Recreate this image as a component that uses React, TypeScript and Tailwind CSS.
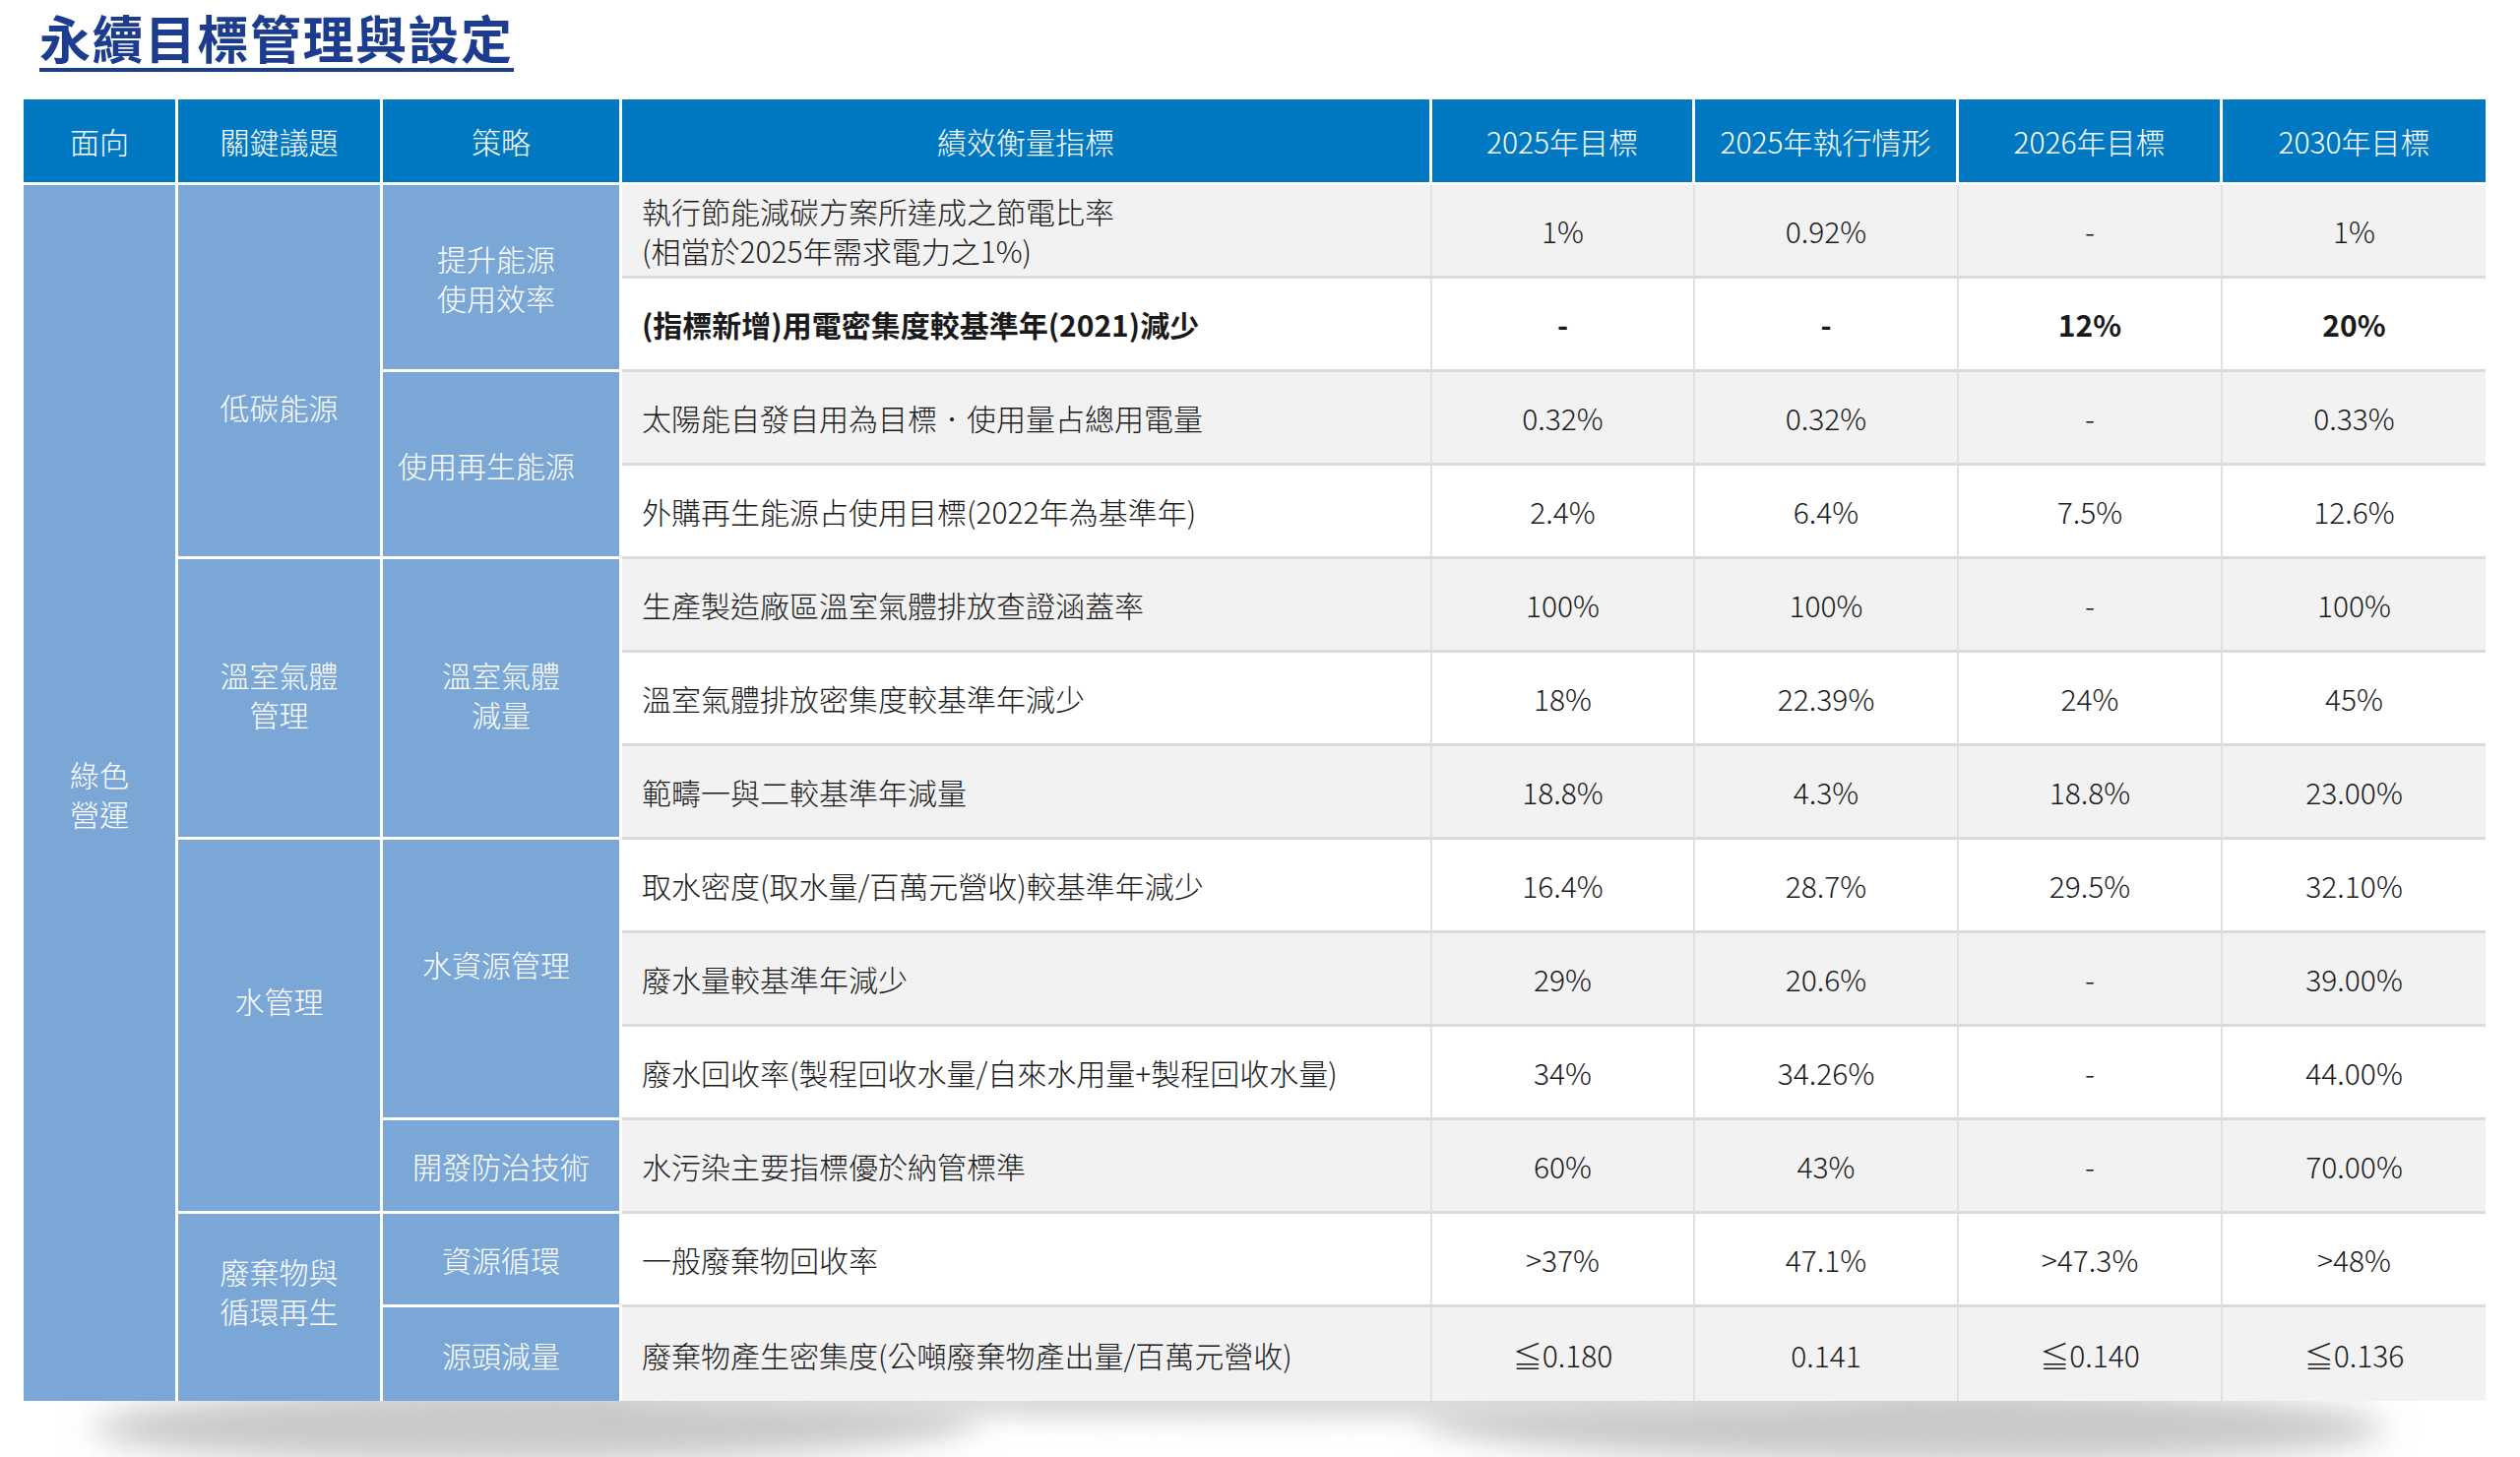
const font = { fontFamily: '"Noto Sans CJK TC", "Noto Sans", sans-serif' };

const colStart = [
  "col-start-1",
  "col-start-2",
  "col-start-3",
  "col-start-4",
  "col-start-5",
  "col-start-6",
  "col-start-7",
  "col-start-8",
];

const rowStart = [
  "row-start-1",
  "row-start-2",
  "row-start-3",
  "row-start-4",
  "row-start-5",
  "row-start-6",
  "row-start-7",
  "row-start-8",
  "row-start-9",
  "row-start-10",
  "row-start-11",
  "row-start-12",
  "row-start-13",
  "row-start-14",
];

const rowSpan: Record<number, string> = {
  1: "row-span-1",
  2: "row-span-2",
  3: "row-span-3",
  4: "row-span-4",
  13: "row-span-13",
};

const headers = ["面向", "關鍵議題", "策略", "績效衡量指標", "2025年目標", "2025年執行情形", "2026年目標", "2030年目標"];

// blue label cells: column, first body row, span, lines, padding to nudge the text
const labels = [
  { col: 0, row: 1, span: 13, lines: ["綠色", "營運"], pad: "" },
  { col: 1, row: 1, span: 4, lines: ["低碳能源"], pad: "pt-[72px]" },
  { col: 1, row: 5, span: 3, lines: ["溫室氣體", "管理"], pad: "pb-[8px]" },
  { col: 1, row: 8, span: 4, lines: ["水管理"], pad: "pb-[52px]" },
  { col: 1, row: 12, span: 2, lines: ["廢棄物與", "循環再生"], pad: "pb-[34px]" },
  { col: 2, row: 1, span: 2, lines: ["提升能源", "使用效率"], pad: "pr-[10px]" },
  { col: 2, row: 3, span: 2, lines: ["使用再生能源"], pad: "pr-[30px]" },
  { col: 2, row: 5, span: 3, lines: ["溫室氣體", "減量"], pad: "pb-[8px]" },
  { col: 2, row: 8, span: 3, lines: ["水資源管理"], pad: "pb-[30px] pr-[10px]" },
  { col: 2, row: 11, span: 1, lines: ["開發防治技術"], pad: "" },
  { col: 2, row: 12, span: 1, lines: ["資源循環"], pad: "" },
  { col: 2, row: 13, span: 1, lines: ["源頭減量"], pad: "" },
];

const rows: { kpi: string[]; vals: string[]; bold?: boolean }[] = [
  { kpi: ["執行節能減碳方案所達成之節電比率", "(相當於2025年需求電力之1%)"], vals: ["1%", "0.92%", "-", "1%"] },
  { kpi: ["(指標新增)用電密集度較基準年(2021)減少"], vals: ["-", "-", "12%", "20%"], bold: true },
  { kpi: ["太陽能自發自用為目標．使用量占總用電量"], vals: ["0.32%", "0.32%", "-", "0.33%"] },
  { kpi: ["外購再生能源占使用目標(2022年為基準年)"], vals: ["2.4%", "6.4%", "7.5%", "12.6%"] },
  { kpi: ["生產製造廠區溫室氣體排放查證涵蓋率"], vals: ["100%", "100%", "-", "100%"] },
  { kpi: ["溫室氣體排放密集度較基準年減少"], vals: ["18%", "22.39%", "24%", "45%"] },
  { kpi: ["範疇一與二較基準年減量"], vals: ["18.8%", "4.3%", "18.8%", "23.00%"] },
  { kpi: ["取水密度(取水量/百萬元營收)較基準年減少"], vals: ["16.4%", "28.7%", "29.5%", "32.10%"] },
  { kpi: ["廢水量較基準年減少"], vals: ["29%", "20.6%", "-", "39.00%"] },
  { kpi: ["廢水回收率(製程回收水量/自來水用量+製程回收水量)"], vals: ["34%", "34.26%", "-", "44.00%"] },
  { kpi: ["水污染主要指標優於納管標準"], vals: ["60%", "43%", "-", "70.00%"] },
  { kpi: ["一般廢棄物回收率"], vals: [">37%", "47.1%", ">47.3%", ">48%"] },
  { kpi: ["廢棄物產生密集度(公噸廢棄物產出量/百萬元營收)"], vals: ["≦0.180", "0.141", "≦0.140", "≦0.136"] },
];

export default function App() {
  return (
    <div className="w-[2560px] h-[1480px] bg-white overflow-hidden font-light" style={font}>
      <div className="pl-[40px] pt-[8px] h-[101px]">
        <h1 className="inline-block text-[52px] leading-[60px] font-bold text-[#1c3d8f] border-b-[4px] border-[#1c3d8f] pb-[1px] tracking-[1.5px]">
          永續目標管理與設定
        </h1>
      </div>

      <div className="relative ml-[24px] w-[2501px]">
        {/* curved drop shadow under the table */}
        <div className="absolute left-[70px] top-[1305px] w-[900px] h-[80px] rounded-[50%] bg-[#c9c9c9] blur-[16px] -rotate-[0.6deg]" />
        <div className="absolute left-[1420px] top-[1305px] w-[980px] h-[80px] rounded-[50%] bg-[#c9c9c9] blur-[16px] rotate-[0.6deg]" />
        <div className="absolute left-[600px] top-[1300px] w-[1300px] h-[40px] rounded-[50%] bg-[#d8d8d8] blur-[12px]" />

        <div className="relative grid grid-cols-[157px_208px_243px_823px_267px_268px_268px_267px] grid-rows-[87px_repeat(13,95px)] text-[30px] leading-[40px]">
          {headers.map((h, i) => (
            <div
              key={h}
              className={`${colStart[i]} row-start-1 flex items-center justify-center bg-[#0079c2] text-white border-b-[3px] border-white ${
                i < 7 ? "border-r-[3px]" : ""
              }`}
            >
              {h}
            </div>
          ))}

          {labels.map((l) => (
            <div
              key={l.lines.join("")}
              className={`${colStart[l.col]} ${rowStart[l.row]} ${rowSpan[l.span]} flex flex-col items-center justify-center bg-[#7ba7d7] text-white border-r-[3px] border-white ${
                l.row + l.span <= 13 ? "border-b-[3px]" : ""
              } ${l.pad}`}
            >
              {l.lines.map((t) => (
                <span key={t}>{t}</span>
              ))}
            </div>
          ))}

          {rows.map((r, ri) => {
            const bg = ri % 2 === 0 ? "bg-[#f2f2f2]" : "bg-white";
            const bb = ri < 12 ? "border-b-[3px] border-b-[#dadada]" : "";
            const weight = r.bold ? "font-bold" : "";
            return [
              <div
                key={`k${ri}`}
                className={`col-start-4 ${rowStart[ri + 1]} ${bg} ${bb} ${weight} border-r-[2px] border-r-[#e1e1e1] flex flex-col justify-center pl-[20px] text-[#1a1a1a]`}
              >
                {r.kpi.map((t) => (
                  <span key={t}>{t}</span>
                ))}
              </div>,
              ...r.vals.map((v, vi) => (
                <div
                  key={`v${ri}-${vi}`}
                  className={`${colStart[vi + 4]} ${rowStart[ri + 1]} ${bg} ${bb} ${weight} ${
                    vi < 3 ? "border-r-[2px] border-r-[#e1e1e1]" : ""
                  } flex items-center justify-center text-[#1a1a1a]`}
                >
                  {v}
                </div>
              )),
            ];
          })}
        </div>
      </div>
    </div>
  );
}
